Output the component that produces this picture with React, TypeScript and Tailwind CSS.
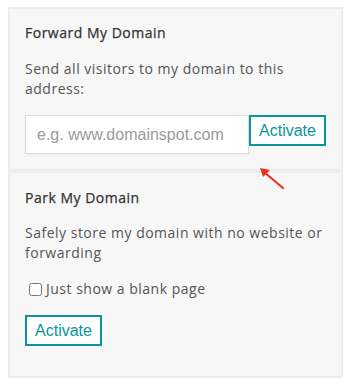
import React from 'react';

const sans = { fontFamily: '"Open Sans", "Noto Sans", sans-serif' };

function ActivateButton() {
  return (
    <button
      type="button"
      className="h-[31px] w-[77px] shrink-0 border-2 border-[#09959b] bg-white text-[16px] leading-none text-[#09959b] font-['Liberation_Sans',Arial,sans-serif]"
    >
      Activate
    </button>
  );
}

export default function App() {
  return (
    <div className="min-h-[387px] bg-white pt-[7px] pl-[8px]">
      <div
        className="relative w-[335px] border-2 border-[#ececec] bg-[#f7f7f7] text-[14px] leading-[20px] tracking-[0.5px]"
        style={sans}
      >
        <section className="px-[15px] pt-[14px] pb-[15px]">
          <h2 className="font-medium text-[#333] [-webkit-text-stroke:0.25px_#333]">Forward My Domain</h2>
          <p className="mt-[16px] text-[#555]">Send all visitors to my domain to this address:</p>
          <div className="mt-[16px] flex items-start tracking-normal">
            <input
              type="text"
              placeholder="e.g. www.domainspot.com"
              className="h-[39px] w-[224px] border border-[#ddd] bg-white px-[11px] text-[16px] shadow-[0_1px_2px_rgba(0,0,0,0.06)] outline-none placeholder:text-[#9a9a9a] font-['Liberation_Sans',Arial,sans-serif]"
            />
            <ActivateButton />
          </div>
        </section>

        <div className="h-[4px] bg-[#eeeeee]" />

        <section className="px-[15px] pt-[15px] pb-[30px]">
          <h2 className="font-medium text-[#333] [-webkit-text-stroke:0.25px_#333]">Park My Domain</h2>
          <p className="mt-[15px] text-[#555]">Safely store my domain with no website or forwarding</p>
          <label className="mt-[16px] flex items-center text-[#555]">
            <input type="checkbox" className="ml-[4px] mr-[4px] h-[13px] w-[13px]" />
            Just show a blank page
          </label>
          <div className="mt-[16px] tracking-normal">
            <ActivateButton />
          </div>
        </section>

        <svg
          className="pointer-events-none absolute left-[247px] top-[156px]"
          width="34"
          height="30"
          viewBox="0 0 34 30"
        >
          <line x1="26" y1="23" x2="7" y2="7" stroke="#f0301f" strokeWidth="2.2" strokeLinecap="round" />
          <polygon points="3,3 13,5 6,12" fill="#f0301f" />
        </svg>
      </div>
    </div>
  );
}
